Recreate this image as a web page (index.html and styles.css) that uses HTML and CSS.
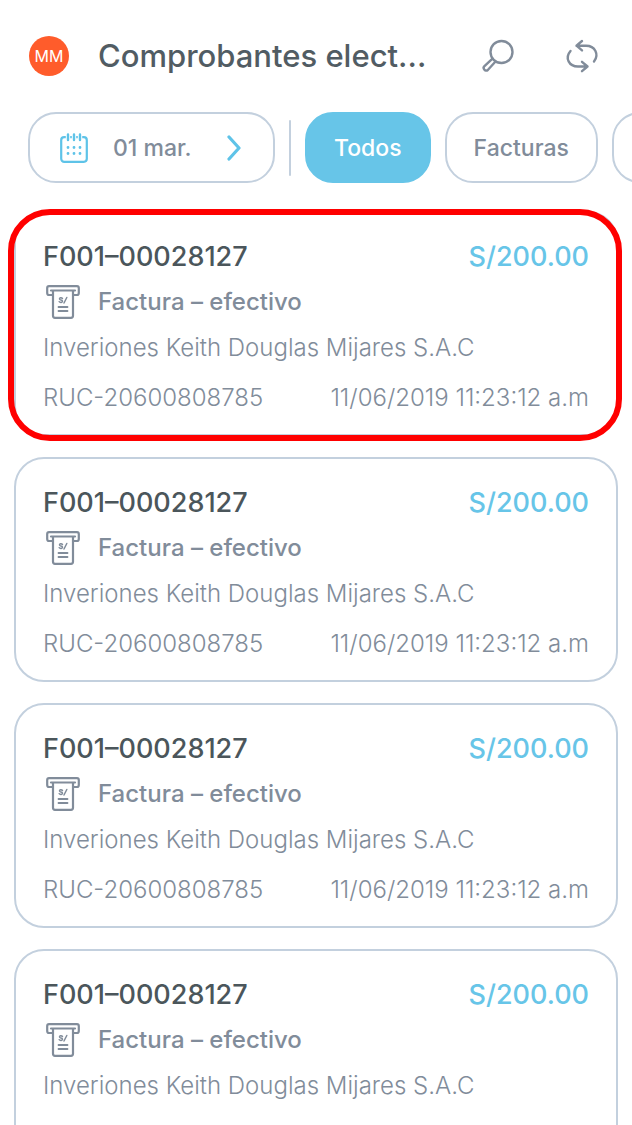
FILE: index.html
```html
<!DOCTYPE html>
<html lang="es">
<head>
<meta charset="utf-8">
<meta name="viewport" content="width=device-width, initial-scale=1">
<title>Comprobantes electrónicos</title>
<link rel="stylesheet" href="styles.css">
</head>
<body>
<svg class="sprite" aria-hidden="true">
  <symbol id="receipt" viewBox="0 0 34 34">
    <g fill="none" stroke="currentColor" stroke-linecap="round" stroke-linejoin="round">
      <path stroke-width="2.200" d="M7 10H3Q1.200 10 1.200 8V3Q1.200 1.200 3 1.200H31Q32.800 1.200 32.800 3V8Q32.800 10 31 10H27"/>
      <path stroke-width="2.200" d="M5 5.500H29M7 6V30.800Q7 32.800 9 32.800H25Q27 32.800 27 30.800V6"/>
      <path stroke-width="1.800" d="M12.500 22H21.500M12.500 26H21.500"/>
      <path stroke-width="1.500" d="M16.500 13.500C15.500 12.200 13.300 12.700 13.500 14C13.700 15.300 16.500 14.800 16.500 16.300C16.500 17.700 14 17.900 13.200 16.700M18 18L20.800 12.500"/>
    </g>
  </symbol>
</svg>
<div class="app">
  <header class="topbar">
    <button class="avatar" type="button" aria-label="Perfil">MM</button>
    <h1 class="topbar-title">Comprobantes elect...</h1>
    <div class="topbar-actions">
      <button class="icon-button" type="button" aria-label="Buscar">
        <svg class="icon" viewBox="0 0 32 32" fill="none" stroke="currentColor" stroke-width="2.400" stroke-linecap="round" stroke-linejoin="round"><circle cx="19.500" cy="12" r="11"/><path d="M10.200 18.800L2.200 26.400C.4 28.200 3.400 32.200 5.800 30L13.300 21.800"/></svg>
      </button>
      <button class="icon-button" type="button" aria-label="Actualizar">
        <svg class="icon" viewBox="0 0 32 32" fill="none" stroke="currentColor" stroke-width="2.400" stroke-linecap="round" stroke-linejoin="round"><path d="M16 1L10.500 5.700L16 10.400M10.500 5.700H20C29 5.700 33.500 14.500 28 21.500M16 21.800L21.500 26.500L16 31.200M21.500 26.500H12C3 26.500-1.500 18 4.500 11"/></svg>
      </button>
    </div>
  </header>

  <nav class="filters" aria-label="Filtros">
    <button class="chip chip-date" type="button">
      <svg class="icon-calendar" viewBox="0 0 28 30" fill="none" stroke="currentColor" stroke-linecap="round"><rect x="1.200" y="4.200" width="25.600" height="24.600" rx="3" stroke-width="2.200"/><path stroke-width="4.400" stroke="#fff" d="M8 2V7M14 2V7M20 2V7"/><path stroke-width="2.400" d="M8 1.500V7M14 1.500V7M20 1.500V7"/><path stroke-width="2.800" d="M8 14.500h.01M14 14.500h.01M20 14.500h.01M8 20.500h.01M14 20.500h.01M20 20.500h.01"/></svg>
      <span class="chip-label">01 mar.</span>
      <svg class="icon-chevron" viewBox="0 0 14 26" fill="none" stroke="currentColor" stroke-width="3.200" stroke-linecap="round" stroke-linejoin="round"><path d="M2 2L12 13L2 24"/></svg>
    </button>
    <span class="divider"></span>
    <button class="chip chip-active" type="button" aria-pressed="true">Todos</button>
    <button class="chip" type="button" aria-pressed="false">Facturas</button>
    <button class="chip" type="button" aria-label="Boletas"></button>
  </nav>

  <main class="list">
    <article class="card card-selected">
      <div class="row"><h2 class="number">F001–00028127</h2><span class="amount">S/200.00</span></div>
      <div class="kind"><svg class="icon-receipt"><use href="#receipt"/></svg><span>Factura – efectivo</span></div>
      <p class="company">Inveriones Keith Douglas Mijares S.A.C</p>
      <div class="row meta"><span>RUC-20600808785</span><time>11/06/2019 11:23:12 a.m</time></div>
    </article>
    <article class="card">
      <div class="row"><h2 class="number">F001–00028127</h2><span class="amount">S/200.00</span></div>
      <div class="kind"><svg class="icon-receipt"><use href="#receipt"/></svg><span>Factura – efectivo</span></div>
      <p class="company">Inveriones Keith Douglas Mijares S.A.C</p>
      <div class="row meta"><span>RUC-20600808785</span><time>11/06/2019 11:23:12 a.m</time></div>
    </article>
    <article class="card">
      <div class="row"><h2 class="number">F001–00028127</h2><span class="amount">S/200.00</span></div>
      <div class="kind"><svg class="icon-receipt"><use href="#receipt"/></svg><span>Factura – efectivo</span></div>
      <p class="company">Inveriones Keith Douglas Mijares S.A.C</p>
      <div class="row meta"><span>RUC-20600808785</span><time>11/06/2019 11:23:12 a.m</time></div>
    </article>
    <article class="card">
      <div class="row"><h2 class="number">F001–00028127</h2><span class="amount">S/200.00</span></div>
      <div class="kind"><svg class="icon-receipt"><use href="#receipt"/></svg><span>Factura – efectivo</span></div>
      <p class="company">Inveriones Keith Douglas Mijares S.A.C</p>
      <div class="row meta"><span>RUC-20600808785</span><time>11/06/2019 11:23:12 a.m</time></div>
    </article>
  </main>
</div>
</body>
</html>
```
FILE: styles.css
```css
* { box-sizing: border-box; }
body {
  margin: 0;
  background: #fff;
  color: #818c9a;
  font-family: Inter, "Open Sans", sans-serif;
  font-size: 24px;
}
h1, h2, p { margin: 0; }
button {
  margin: 0;
  padding: 0;
  border: 0;
  background: none;
  color: inherit;
  font: inherit;
  cursor: pointer;
}
.sprite { display: none; }
.app {
  display: flex;
  flex-direction: column;
  height: 100vh;
  overflow: hidden;
}
.topbar {
  display: flex;
  flex: none;
  align-items: center;
  height: 112px;
  padding: 0 34px 0 29px;
}
.avatar {
  flex: none;
  width: 40px;
  height: 40px;
  border-radius: 50%;
  background: #ff5c2b;
  color: #fff;
  font-size: 16px;
}
.topbar-title {
  flex: 1;
  min-width: 0;
  margin-left: 29px;
  overflow: hidden;
  color: #515c63;
  font-size: 31px;
  font-weight: 500;
  line-height: 40px;
  white-space: nowrap;
}
.topbar-actions { display: flex; flex: none; gap: 52px; }
.icon-button { display: flex; }
.icon { width: 32px; height: 32px; overflow: visible; }
.filters {
  display: flex;
  flex: none;
  gap: 14px;
  height: 71px;
  padding-left: 28px;
  overflow: hidden;
}
.chip {
  flex: none;
  min-width: 96px;
  padding: 0 27px;
  border: 2px solid #c3d0de;
  border-radius: 28px;
  font-size: 23px;
  font-weight: 500;
}
.chip-date {
  display: flex;
  align-items: center;
  width: 247px;
  padding: 0 32px 0 30px;
}
.chip-label { flex: 1; margin-left: 25px; text-align: left; }
.chip-active { border-color: #67c5e8; background: #67c5e8; color: #fff; }
.icon-calendar { width: 28px; height: 30px; color: #5ec3e8; }
.icon-chevron { width: 14px; height: 26px; color: #5ec3e8; }
.divider {
  flex: none;
  align-self: center;
  width: 2px;
  height: 56px;
  border-radius: 1px;
  background: #c3d0de;
}
.list {
  display: flex;
  flex: 1;
  flex-direction: column;
  gap: 21px;
  min-height: 0;
  padding: 28px 14px 22px;
  overflow-y: auto;
  scrollbar-width: none;
}
.card {
  position: relative;
  flex: none;
  padding: 26px 27px 18px;
  border: 2px solid #c3d0de;
  border-radius: 30px;
  line-height: 36px;
}
.card-selected::after {
  content: "";
  position: absolute;
  inset: -4px -6px -7px -8px;
  border: 6px solid #f00;
  border-radius: 42px;
  pointer-events: none;
}
.row { display: flex; justify-content: space-between; }
.number { color: #4b565b; font-size: 27px; font-weight: 500; }
.amount { color: #67c5e8; font-size: 27px; font-weight: 500; }
.kind {
  display: flex;
  align-items: center;
  gap: 18px;
  height: 48px;
  margin-top: 3px;
  padding-left: 3px;
  font-weight: 500;
}
.icon-receipt { width: 34px; height: 34px; }
.company { margin-top: 4px; font-weight: 300; white-space: nowrap; }
.meta { margin-top: 14px; font-weight: 300; white-space: nowrap; }
```
